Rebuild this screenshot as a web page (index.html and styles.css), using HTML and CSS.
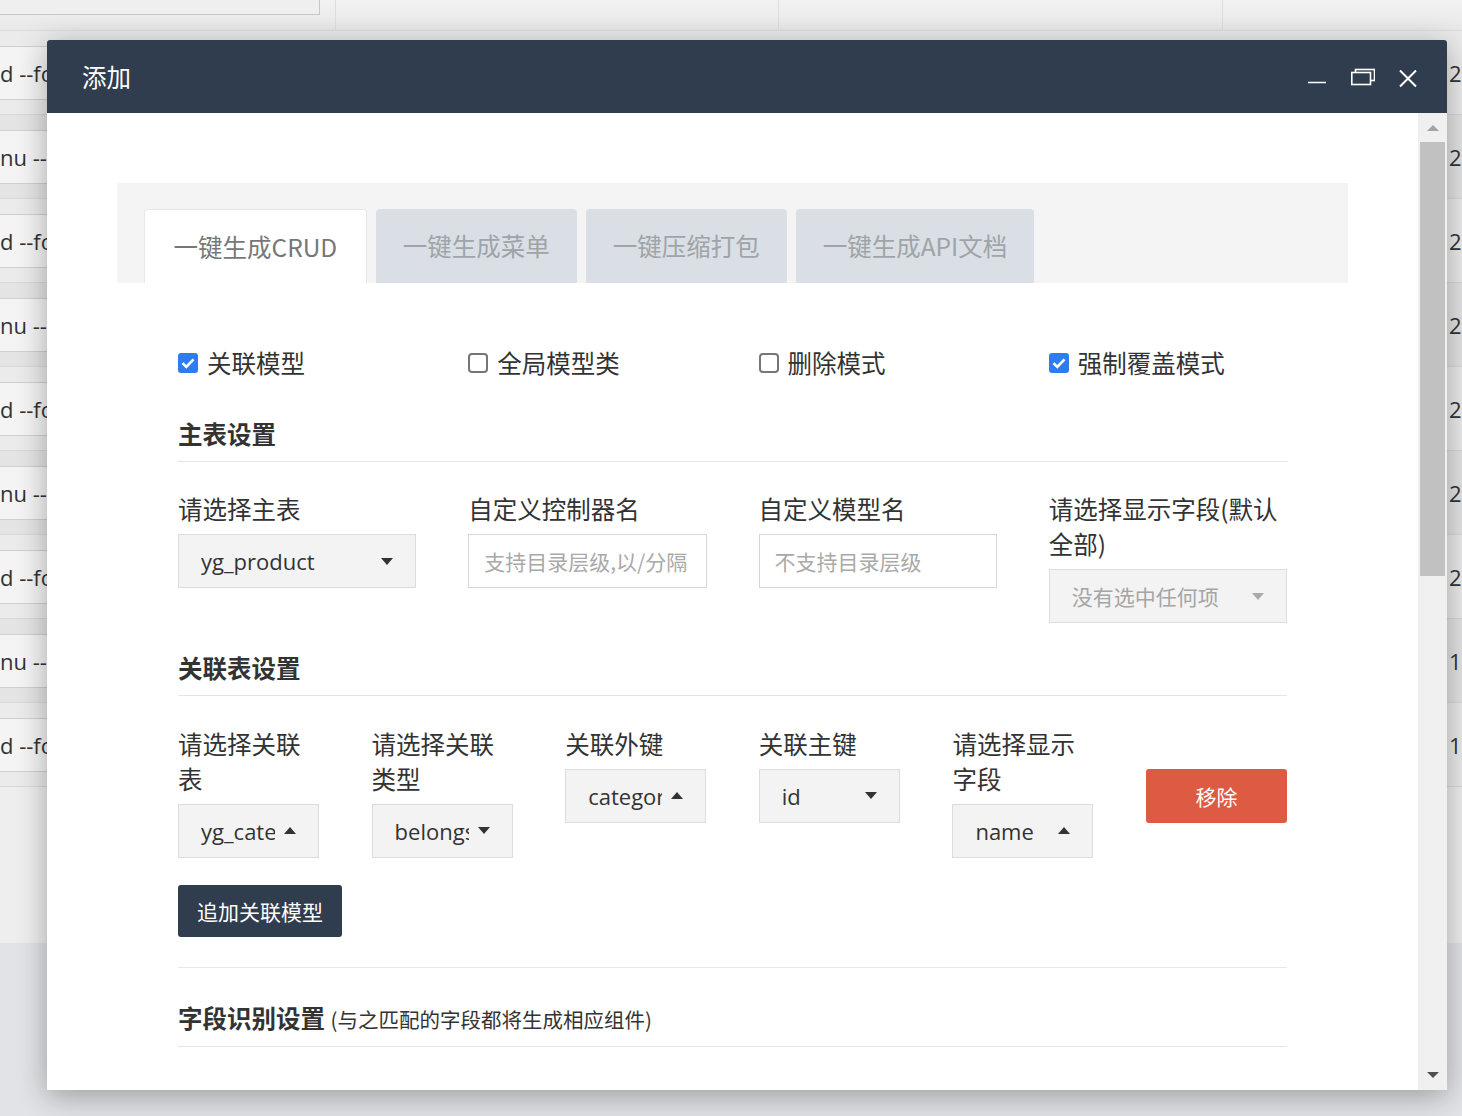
FILE: index.html
```html
<!DOCTYPE html>
<html lang="zh-CN">
<head>
<meta charset="utf-8">
<title>添加</title>
<link rel="stylesheet" href="styles.css">
</head>
<body>
<div class="page">
  <div class="topbar">
    <div class="tcell c1"><div class="search"></div></div>
    <div class="tcell c2"></div>
    <div class="tcell c3"></div>
    <div class="tcell c4"></div>
  </div>
  <div class="rows">
    <div class="row"><span class="code">d --fo</span><span class="num">2</span></div>
    <div class="row"><span class="code">nu --</span><span class="num">2</span></div>
    <div class="row"><span class="code">d --fo</span><span class="num">2</span></div>
    <div class="row"><span class="code">nu --</span><span class="num">2</span></div>
    <div class="row"><span class="code">d --fo</span><span class="num">2</span></div>
    <div class="row"><span class="code">nu --</span><span class="num">2</span></div>
    <div class="row"><span class="code">d --fo</span><span class="num">2</span></div>
    <div class="row"><span class="code">nu --</span><span class="num">1</span></div>
    <div class="row"><span class="code">d --fo</span><span class="num">1</span></div>
  </div>
</div>

<div class="modal">
  <div class="mhead">
    <div class="mtitle">添加</div>
    <div class="mtools">
      <svg class="ico" width="24" height="24" viewBox="0 0 24 24"><line x1="3" y1="17.5" x2="21" y2="17.5" stroke="#fff" stroke-width="1.6"/></svg>
      <svg class="ico" width="24" height="24" viewBox="0 0 24 24"><rect x="4.5" y="4.5" width="19" height="11" fill="none" stroke="#fff" stroke-width="1.6"/><rect x="0.8" y="7.5" width="18.7" height="12" fill="#2f3d4e" stroke="#fff" stroke-width="1.6"/></svg>
      <svg class="ico" width="24" height="24" viewBox="0 0 24 24"><path d="M4 5.5 L20 21.5 M20 5.5 L4 21.5" stroke="#fff" stroke-width="2" fill="none"/></svg>
    </div>
  </div>
  <div class="mbody">
    <div class="content">
      <div class="tabs">
        <div class="tab active">一键生成CRUD</div>
        <div class="tab">一键生成菜单</div>
        <div class="tab">一键压缩打包</div>
        <div class="tab">一键生成API文档</div>
      </div>
      <div class="pane">
        <div class="checks">
          <label class="chk"><span class="box on"><svg width="20" height="20" viewBox="0 0 20 20"><rect x="0" y="0" width="20" height="20" rx="3" fill="#2f7cf0"/><path d="M4.5 10.2 L8.3 14 L15.5 6.3" stroke="#fff" stroke-width="2.6" fill="none"/></svg></span>关联模型</label>
          <label class="chk"><span class="box"><svg width="20" height="20" viewBox="0 0 20 20"><rect x="1" y="1" width="18" height="18" rx="3" fill="#fff" stroke="#767676" stroke-width="2"/></svg></span>全局模型类</label>
          <label class="chk"><span class="box"><svg width="20" height="20" viewBox="0 0 20 20"><rect x="1" y="1" width="18" height="18" rx="3" fill="#fff" stroke="#767676" stroke-width="2"/></svg></span>删除模式</label>
          <label class="chk"><span class="box on"><svg width="20" height="20" viewBox="0 0 20 20"><rect x="0" y="0" width="20" height="20" rx="3" fill="#2f7cf0"/><path d="M4.5 10.2 L8.3 14 L15.5 6.3" stroke="#fff" stroke-width="2.6" fill="none"/></svg></span>强制覆盖模式</label>
        </div>

        <div class="sec first">主表设置</div>
        <div class="grid4">
          <div class="field">
            <div class="lbl">请选择主表</div>
            <div class="select"><span class="val">yg_product</span><span class="caret"></span></div>
          </div>
          <div class="field">
            <div class="lbl">自定义控制器名</div>
            <input class="input" type="text" placeholder="支持目录层级,以/分隔">
          </div>
          <div class="field">
            <div class="lbl">自定义模型名</div>
            <input class="input" type="text" placeholder="不支持目录层级">
          </div>
          <div class="field">
            <div class="lbl">请选择显示字段(默认全部)</div>
            <div class="select disabled"><span class="val">没有选中任何项</span><span class="caret"></span></div>
          </div>
        </div>

        <div class="sec second">关联表设置</div>
        <div class="grid6">
          <div class="field">
            <div class="lbl">请选择关联表</div>
            <div class="select sm"><span class="val">yg_category</span><span class="caret up"></span></div>
          </div>
          <div class="field">
            <div class="lbl">请选择关联类型</div>
            <div class="select sm"><span class="val">belongsTo</span><span class="caret"></span></div>
          </div>
          <div class="field">
            <div class="lbl">关联外键</div>
            <div class="select sm"><span class="val">category_id</span><span class="caret up"></span></div>
          </div>
          <div class="field">
            <div class="lbl">关联主键</div>
            <div class="select sm"><span class="val">id</span><span class="caret"></span></div>
          </div>
          <div class="field">
            <div class="lbl">请选择显示字段</div>
            <div class="select sm"><span class="val">name</span><span class="caret up"></span></div>
          </div>
          <div class="field">
            <div class="lbl">&nbsp;</div>
            <button class="btn danger" type="button">移除</button>
          </div>
        </div>

        <button class="btn dark add" type="button">追加关联模型</button>
        <div class="hr"></div>

        <div class="sec third">字段识别设置 <small>(与之匹配的字段都将生成相应组件)</small></div>
      </div>
    </div>
    <div class="vscroll">
      <span class="arr up"></span>
      <span class="thumb"></span>
      <span class="spacer"></span>
      <span class="arr down"></span>
    </div>
  </div>
</div>
</body>
</html>
```

FILE: styles.css
```css
html, body {
  margin: 0;
  padding: 0;
}
body {
  width: 1462px;
  height: 1116px;
  overflow: hidden;
  position: relative;
  background: #e1e3e6;
  font-family: "Noto Sans CJK SC", "Noto Sans", sans-serif;
  color: #333;
}

/* ---------- background page ---------- */
.page {
  height: 943px;
  background: #eeeeee;
  overflow: hidden;
}
.topbar {
  height: 30px;
  display: grid;
  grid-template-columns: 336px 443px 444px 1fr;
  border-bottom: 1px solid #dcdcdc;
  background: linear-gradient(#f2f2f2, #e8e8e8);
}
.tcell {
  border-right: 1px solid #dddddd;
}
.tcell.c4 { border-right: none; }
.search {
  width: 320px;
  height: 15px;
  box-sizing: border-box;
  border: 1px solid #c6c6ce;
  border-top: none;
  border-left: none;
  background: #efefef;
}
.rows {
  display: flex;
  flex-direction: column;
}
.row {
  height: 84px;
  box-sizing: border-box;
  border-bottom: 1px solid #d9d9d9;
  display: flex;
  align-items: center;
  justify-content: space-between;
  background: #ebebeb;
  font-family: "Open Sans", "Liberation Sans", sans-serif;
  font-size: 22px;
  color: #333;
}
.row:nth-child(even) { background: #e4e4e4; }
.code {
  display: flex;
  align-items: center;
  height: 54px;
  width: 200px;
  box-sizing: border-box;
  border-top: 1px solid #d0d0d0;
  border-bottom: 1px solid #d0d0d0;
  background: #f4f4f4;
  white-space: nowrap;
}
.num {
  width: 13px;
}

/* ---------- modal ---------- */
.modal {
  position: absolute;
  left: 47px;
  top: 40px;
  width: 1400px;
  height: 1050px;
  background: #fff;
  border-radius: 3px 3px 0 0;
  box-shadow: 0 6px 30px rgba(0, 0, 0, 0.32);
  display: flex;
  flex-direction: column;
  overflow: hidden;
}
.mhead {
  height: 73px;
  flex: none;
  background: #2f3d4e;
  display: flex;
  align-items: center;
  padding: 0 27px 0 35px;
  color: #fff;
}
.mtitle {
  flex: 1;
  font-size: 24.5px;
}
.mtools {
  display: flex;
  gap: 21.5px;
}
.ico { display: block; }

.mbody {
  flex: 1;
  min-height: 0;
  display: flex;
}
.content {
  flex: 1;
  overflow: hidden;
  padding: 70px;
}
.vscroll {
  width: 29px;
  flex: none;
  background: #f0f0f0;
  display: flex;
  flex-direction: column;
  align-items: center;
}
.arr {
  width: 0;
  height: 0;
  border-left: 6.5px solid transparent;
  border-right: 6.5px solid transparent;
}
.arr.up {
  margin-top: 12px;
  border-bottom: 6px solid #a3a3a3;
}
.arr.down {
  margin-bottom: 12px;
  border-top: 6px solid #505050;
}
.thumb {
  margin-top: 11px;
  width: 25px;
  height: 434px;
  background: #c1c1c1;
}
.spacer { flex: 1; }

/* tabs */
.tabs {
  background: #f4f4f4;
  padding: 26px 27px 0;
  display: flex;
  gap: 9px;
}
.tab {
  height: 74px;
  line-height: 74px;
  padding: 0 27px;
  font-size: 24.5px;
  color: #9ea4a8;
  background: #d9dfe5;
  border-radius: 4px 4px 0 0;
  box-sizing: border-box;
}
.tab.active {
  background: #fff;
  color: #777;
  border: 1px solid #e8e8e8;
  border-bottom: none;
  padding: 0 28.5px;
}

.pane {
  padding: 62px 61px 0;
}

/* checkboxes */
.checks {
  display: grid;
  grid-template-columns: repeat(4, minmax(0, 1fr));
  column-gap: 52px;
}
.chk {
  display: flex;
  align-items: center;
  gap: 9px;
  font-size: 24.5px;
  line-height: 35px;
  color: #333;
}
.box {
  display: block;
  width: 20px;
  height: 20px;
}
.box svg { display: block; }

/* section headings */
.sec {
  font-size: 24.5px;
  font-weight: bold;
  line-height: 35px;
  padding-bottom: 9.5px;
  border-bottom: 1px solid #e5e5e5;
  color: #333;
}
.sec.first { margin-top: 36px; }
.sec.second { margin-top: 27px; }
.sec.third { margin-top: 32px; }
.sec small {
  font-size: 20.5px;
  font-weight: normal;
}

.grid4 {
  margin-top: 29.5px;
  display: grid;
  grid-template-columns: repeat(4, minmax(0, 1fr));
  column-gap: 52px;
  align-items: start;
}
.grid6 {
  margin-top: 30px;
  display: grid;
  grid-template-columns: repeat(6, minmax(0, 1fr));
  column-gap: 52.6px;
  align-items: start;
}
.lbl {
  font-size: 24.5px;
  line-height: 35px;
  color: #333;
  margin-bottom: 8px;
}

.select {
  height: 54px;
  box-sizing: border-box;
  border: 1px solid #dcdcdc;
  background: #f3f3f3;
  display: flex;
  align-items: center;
  padding: 0 22px 0 22px;
  font-family: "Open Sans", "Noto Sans CJK SC", sans-serif;
  font-size: 22px;
  color: #333;
}
.select .val {
  flex: 1;
  min-width: 0;
  overflow: hidden;
  white-space: nowrap;
}
.select.sm .val { margin-right: 9px; }
.caret {
  flex: none;
  width: 0;
  height: 0;
  border-left: 6.5px solid transparent;
  border-right: 6.5px solid transparent;
  border-top: 7px solid #333;
}
.caret.up {
  border-top: none;
  border-bottom: 7px solid #333;
}
.select.disabled {
  color: #a5a5a5;
  font-family: "Noto Sans CJK SC", sans-serif;
  font-size: 21px;
}
.select.disabled .caret { border-top-color: #aaa; }

.input {
  display: block;
  width: 100%;
  height: 54px;
  box-sizing: border-box;
  border: 1px solid #d5d5d5;
  background: #fff;
  padding: 0 15px;
  margin: 0;
  font-family: "Noto Sans CJK SC", sans-serif;
  font-size: 21px;
  color: #333;
  outline: none;
  border-radius: 0;
}
.input::placeholder { color: #a9a9a9; }

.btn {
  display: block;
  border: none;
  margin: 0;
  font-family: "Noto Sans CJK SC", sans-serif;
  font-size: 21px;
  color: #fff;
  border-radius: 3px;
  cursor: pointer;
}
.btn.danger {
  width: 100%;
  height: 54px;
  background: #dd5a43;
}
.btn.dark {
  background: #2f3d4e;
}
.btn.add {
  margin-top: 27px;
  height: 52px;
  padding: 0 19px;
}
.hr {
  margin-top: 30px;
  height: 1px;
  background: #e8e8e8;
}
```
